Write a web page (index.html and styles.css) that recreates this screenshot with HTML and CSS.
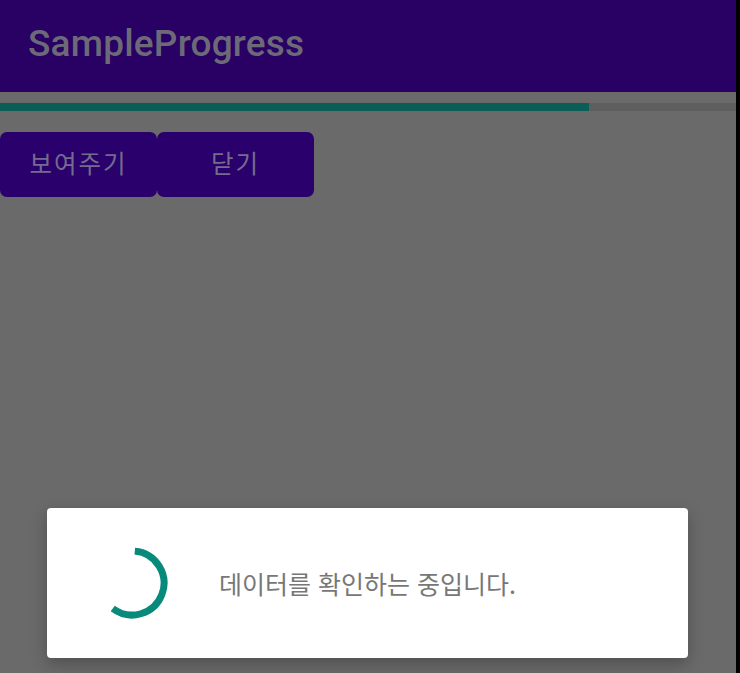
FILE: index.html
```html
<!DOCTYPE html>
<html lang="ko">
<head>
<meta charset="utf-8">
<title>SampleProgress</title>
<link rel="stylesheet" href="styles.css">
</head>
<body>
<div class="screen">
  <header class="appbar">
    <h1 class="title">SampleProgress</h1>
  </header>
  <div class="progress">
    <div class="progress-fill" style="width: 80%"></div>
  </div>
  <div class="buttons">
    <button class="btn">보여주기</button>
    <button class="btn">닫기</button>
  </div>
  <div class="dialog">
    <svg class="spinner" width="76" height="76" viewBox="0 0 76 76" aria-hidden="true">
      <path d="M40.79 6.12 A32 32 0 1 1 18.74 63.56" fill="none" stroke="#088a7b" stroke-width="7"/>
    </svg>
    <p class="message">데이터를 확인하는 중입니다.</p>
  </div>
</div>
</body>
</html>
```
FILE: styles.css
```css
* { box-sizing: border-box; }
html, body {
  margin: 0;
  padding: 0;
  background: #000;
  height: 100%;
  overflow: hidden;
}
.screen {
  width: 736px;
  height: 673px;
  background: #6a6a6a;
  display: flex;
  flex-direction: column;
}
.appbar {
  height: 92px;
  background: #290063;
  padding: 22px 0 0 28px;
}
.title {
  margin: 0;
  font-family: Roboto, "Liberation Sans", sans-serif;
  font-weight: 500;
  font-size: 37px;
  letter-spacing: 0.2px;
  line-height: normal;
  color: #6c6a78;
}
.progress {
  margin-top: 11px;
  height: 8px;
  background: #5e5e5e;
}
.progress-fill {
  height: 100%;
  background: #0b5e56;
}
.buttons {
  margin-top: 21px;
  display: flex;
}
.btn {
  width: 157px;
  height: 65px;
  border: none;
  border-radius: 7px;
  background: #2a006c;
  color: #746c8c;
  font-family: "Noto Sans CJK KR", Roboto, sans-serif;
  font-size: 24.5px;
  letter-spacing: 2px;
  padding: 0;
  padding-bottom: 4px;
}
.dialog {
  margin: 311px 0 0 47px;
  width: 641px;
  height: 150px;
  background: #fff;
  border-radius: 4px;
  box-shadow: 0 6px 16px rgba(0,0,0,0.25);
  display: flex;
  align-items: center;
  padding-left: 47px;
  gap: 49px;
}
.spinner {
  flex: none;
  display: block;
}
.message {
  margin: 0;
  font-family: "Noto Sans CJK KR", Roboto, sans-serif;
  font-size: 25px;
  color: #777777;
}
```
